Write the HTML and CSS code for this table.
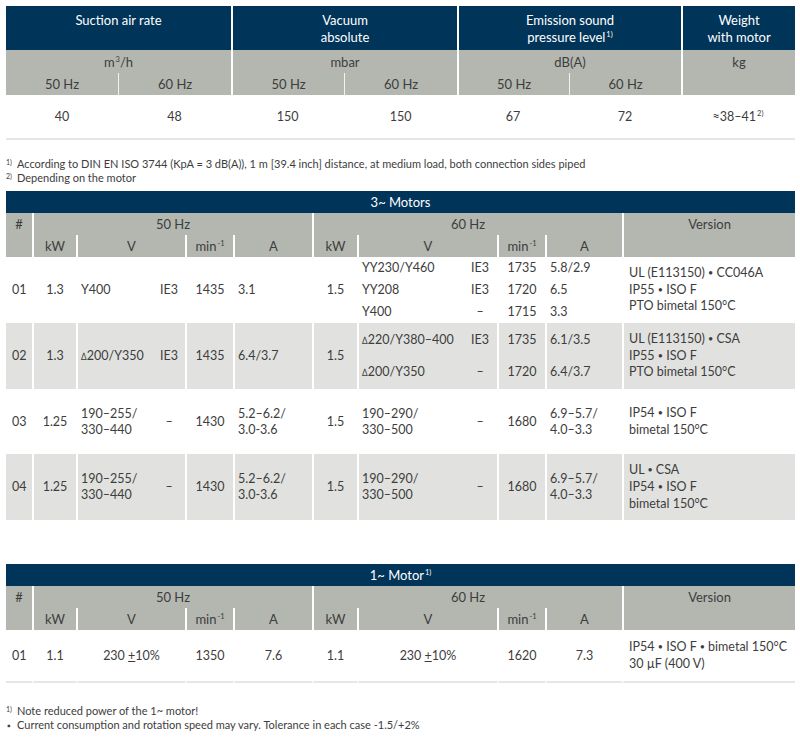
FILE: index.html
```html
<!DOCTYPE html>
<html lang="en">
<head>
<meta charset="utf-8">
<title>Technical data</title>
<link rel="stylesheet" href="styles.css">
</head>
<body>
<table class="spec">
  <colgroup>
    <col class="w112"><col class="w113"><col class="w113"><col class="w113"><col class="w112"><col class="w112"><col class="w114">
  </colgroup>
  <thead>
    <tr class="dark">
      <th colspan="2" class="c1">Suction air rate</th>
      <th colspan="2">Vacuum<br>absolute</th>
      <th colspan="2">Emission sound<br>pressure level<span class="sup">1)</span></th>
      <th>Weight<br>with motor</th>
    </tr>
    <tr class="unit">
      <th colspan="2" class="c1">m<span class="sup">3</span>/h</th>
      <th colspan="2">mbar</th>
      <th colspan="2">dB(A)</th>
      <th>kg</th>
    </tr>
    <tr class="hz">
      <th class="c1">50 Hz</th><th class="sub">60 Hz</th>
      <th>50 Hz</th><th class="sub">60 Hz</th>
      <th>50 Hz</th><th class="sub">60 Hz</th>
      <th></th>
    </tr>
  </thead>
  <tbody>
    <tr>
      <td>40</td><td>48</td><td>150</td><td>150</td><td>67</td><td>72</td><td>≈38–41<span class="sup">2)</span></td>
    </tr>
  </tbody>
</table>

<div class="notes notes-top">
  <div class="fn"><span class="mk">1)</span><span>According to DIN EN ISO 3744 (KpA = 3 dB(A)), 1 m [39.4 inch] distance, at medium load, both connection sides piped</span></div>
  <div class="fn"><span class="mk">2)</span><span>Depending on the motor</span></div>
</div>

<table class="motor">
  <colgroup>
    <col class="m1"><col class="m2"><col class="m3"><col class="m4"><col class="m5"><col class="m6">
    <col class="m7"><col class="m8"><col class="m9"><col class="m10"><col class="m11"><col class="m12">
  </colgroup>
  <thead>
    <tr class="title"><th colspan="12">3~ Motors</th></tr>
    <tr class="h1">
      <th rowspan="2" class="c1 top">#</th>
      <th colspan="5">50 Hz</th>
      <th colspan="5">60 Hz</th>
      <th rowspan="2" class="top">Version</th>
    </tr>
    <tr class="h2">
      <th>kW</th><th colspan="2">V</th><th>min<span class="sup">-1</span></th><th>A</th>
      <th>kW</th><th colspan="2">V</th><th>min<span class="sup">-1</span></th><th>A</th>
    </tr>
  </thead>
  <tbody>
    <tr class="row r1">
      <td class="c1">01</td>
      <td class="ctr">1.3</td>
      <td>Y400</td>
      <td class="ie">IE3</td>
      <td class="ctr">1435</td>
      <td>3.1</td>
      <td class="ctr">1.5</td>
      <td class="stack3">YY230/Y460<br>YY208<br>Y400</td>
      <td class="ie stack3">IE3<br>IE3<br>–</td>
      <td class="ctr stack3">1735<br>1720<br>1715</td>
      <td class="stack3">5.8/2.9<br>6.5<br>3.3</td>
      <td class="ver">UL (E113150) <span class="dot">•</span> CC046A<br>IP55 <span class="dot">•</span> ISO F<br>PTO bimetal 150°C</td>
    </tr>
    <tr class="row alt">
      <td class="c1">02</td>
      <td class="ctr">1.3</td>
      <td><span class="delta">∆</span>200/Y350</td>
      <td class="ie">IE3</td>
      <td class="ctr">1435</td>
      <td>6.4/3.7</td>
      <td class="ctr">1.5</td>
      <td class="stack2"><span class="delta">∆</span>220/Y380–400<br><span class="delta">∆</span>200/Y350</td>
      <td class="ie stack2">IE3<br>–</td>
      <td class="ctr stack2">1735<br>1720</td>
      <td class="stack2">6.1/3.5<br>6.4/3.7</td>
      <td class="ver">UL (E113150) <span class="dot">•</span> CSA<br>IP55 <span class="dot">•</span> ISO F<br>PTO bimetal 150°C</td>
    </tr>
    <tr class="row">
      <td class="c1">03</td>
      <td class="ctr">1.25</td>
      <td class="two">190–255/<br>330–440</td>
      <td class="ie">–</td>
      <td class="ctr">1430</td>
      <td class="two">5.2–6.2/<br>3.0-3.6</td>
      <td class="ctr">1.5</td>
      <td class="two">190–290/<br>330–500</td>
      <td class="ie">–</td>
      <td class="ctr">1680</td>
      <td class="two">6.9–5.7/<br>4.0–3.3</td>
      <td class="ver">IP54 <span class="dot">•</span> ISO F<br>bimetal 150°C</td>
    </tr>
    <tr class="row alt">
      <td class="c1">04</td>
      <td class="ctr">1.25</td>
      <td class="two">190–255/<br>330–440</td>
      <td class="ie">–</td>
      <td class="ctr">1430</td>
      <td class="two">5.2–6.2/<br>3.0-3.6</td>
      <td class="ctr">1.5</td>
      <td class="two">190–290/<br>330–500</td>
      <td class="ie">–</td>
      <td class="ctr">1680</td>
      <td class="two">6.9–5.7/<br>4.0–3.3</td>
      <td class="ver">UL <span class="dot">•</span> CSA<br>IP54 <span class="dot">•</span> ISO F<br>bimetal 150°C</td>
    </tr>
  </tbody>
</table>

<table class="motor single">
  <colgroup>
    <col class="m1"><col class="m2"><col class="m3"><col class="m4"><col class="m5"><col class="m6">
    <col class="m7"><col class="m8"><col class="m9"><col class="m10"><col class="m11"><col class="m12">
  </colgroup>
  <thead>
    <tr class="title"><th colspan="12">1~ Motor<span class="sup">1)</span></th></tr>
    <tr class="h1">
      <th rowspan="2" class="c1 top">#</th>
      <th colspan="5">50 Hz</th>
      <th colspan="5">60 Hz</th>
      <th rowspan="2" class="top">Version</th>
    </tr>
    <tr class="h2">
      <th>kW</th><th colspan="2">V</th><th>min<span class="sup">-1</span></th><th>A</th>
      <th>kW</th><th colspan="2">V</th><th>min<span class="sup">-1</span></th><th>A</th>
    </tr>
  </thead>
  <tbody>
    <tr class="row last">
      <td class="c1">01</td>
      <td class="ctr">1.1</td>
      <td colspan="2" class="ctr">230 <span class="pm">+</span>10%</td>
      <td class="ctr">1350</td>
      <td class="ctr">7.6</td>
      <td class="ctr">1.1</td>
      <td colspan="2" class="ctr">230 <span class="pm">+</span>10%</td>
      <td class="ctr">1620</td>
      <td class="ctr">7.3</td>
      <td class="ver">IP54 <span class="dot">•</span> ISO F <span class="dot">•</span> bimetal 150°C<br>30 µF (400 V)</td>
    </tr>
  </tbody>
</table>

<div class="notes notes-bottom">
  <div class="fn"><span class="mk">1)</span><span>Note reduced power of the 1~ motor!</span></div>
  <div class="fn"><span class="mk bullet">▪</span><span>Current consumption and rotation speed may vary. Tolerance in each case -1.5/+2%</span></div>
</div>
</body>
</html>
```

FILE: styles.css
```css
* {
  box-sizing: border-box;
}

body {
  margin: 0;
  padding: 6px;
  background: #ffffff;
  color: #3d3d3d;
  font-family: Lato, "Open Sans", "Liberation Sans", sans-serif;
  font-size: 13px;
}

table {
  width: 789px;
  border-collapse: separate;
  border-spacing: 0;
  table-layout: fixed;
}

th {
  font-weight: normal;
}

.sup {
  font-size: 7.5px;
  line-height: 0;
  vertical-align: 5px;
  margin-left: 1px;
}

.dot {
  font-size: 9px;
  vertical-align: 1px;
}

.delta {
  font-size: 10px;
}

/* ---------- top spec table ---------- */
.w112 { width: 112px; }
.w113 { width: 113px; }
.w114 { width: 114px; }

.spec th {
  border-left: 2px solid #ffffff;
  padding: 0 4px;
  text-align: center;
}

.spec th.c1 {
  border-left: 0;
}

.spec .dark th {
  background: #003459;
  color: #ffffff;
  height: 44px;
  line-height: 17px;
  vertical-align: top;
  padding-top: 6px;
}

.spec .unit th {
  background: #b3b7b0;
  height: 21px;
  line-height: 21px;
  padding-top: 2px;
}

.spec .hz th {
  background: #b3b7b0;
  height: 22px;
  line-height: 22px;
}

.spec .hz th.sub {
  border-left: 1px solid #f2f2f2;
}

.spec td {
  height: 45px;
  text-align: center;
  border-bottom: 2px solid #e6e6e6;
  padding: 0;
  font-size: 12.5px;
}

/* ---------- footnotes ---------- */
.notes {
  font-size: 11px;
  line-height: 14px;
}

.notes-top {
  margin: 17px 0 6px;
}

.notes-bottom {
  margin-top: 21px;
}

.fn {
  display: flex;
}

.mk {
  width: 11px;
  flex: none;
  font-size: 7px;
  line-height: 10px;
}

.mk.bullet {
  font-size: 9px;
  line-height: 15px;
  padding-left: 1px;
}

/* ---------- motor tables ---------- */
.m1 { width: 26px; }
.m2 { width: 44px; }
.m3 { width: 77px; }
.m4 { width: 32px; }
.m5 { width: 48px; }
.m6 { width: 79px; }
.m7 { width: 45px; }
.m8 { width: 106px; }
.m9 { width: 34px; }
.m10 { width: 48px; }
.m11 { width: 77px; }
.m12 { width: 173px; }

.motor.single {
  margin-top: 44px;
}

.motor .title th {
  background: #003459;
  color: #ffffff;
  height: 22px;
  line-height: 22px;
  padding: 0;
}

.motor .h1 th,
.motor .h2 th {
  background: #b3b7b0;
  height: 22px;
  line-height: 22px;
  padding: 0;
  border-left: 2px solid #ffffff;
  text-align: center;
}

.motor th.c1 {
  border-left: 0;
}

.motor th.top {
  vertical-align: top;
}

.motor td {
  padding: 0 3px;
  border-left: 2px solid #ffffff;
  vertical-align: middle;
  text-align: left;
  line-height: 16px;
  font-size: 12.5px;
  white-space: nowrap;
}

.motor td.c1 {
  border-left: 0;
  padding-left: 6px;
}

.motor td.ie {
  border-left: 0;
  padding: 0;
  text-align: center;
}

.motor td.ctr {
  text-align: center;
  padding: 0;
}

.motor .row {
  height: 65px;
}

.motor .r1 {
  height: 66px;
}

.motor .alt td {
  background: #e1e2df;
}

.motor td.stack3 {
  line-height: 21.7px;
}

.motor td.stack2 {
  line-height: 32px;
}

.motor td.ver {
  line-height: 16.7px;
  padding: 8px 4px 8px 5px;
}

.motor .r1 td.ver {
  padding-top: 7px;
  padding-bottom: 7px;
}

.motor .last {
  height: 53px;
}

.motor .last td {
  border-bottom: 2px solid #e6e6e6;
}

.pm {
  text-decoration: underline;
}
```
